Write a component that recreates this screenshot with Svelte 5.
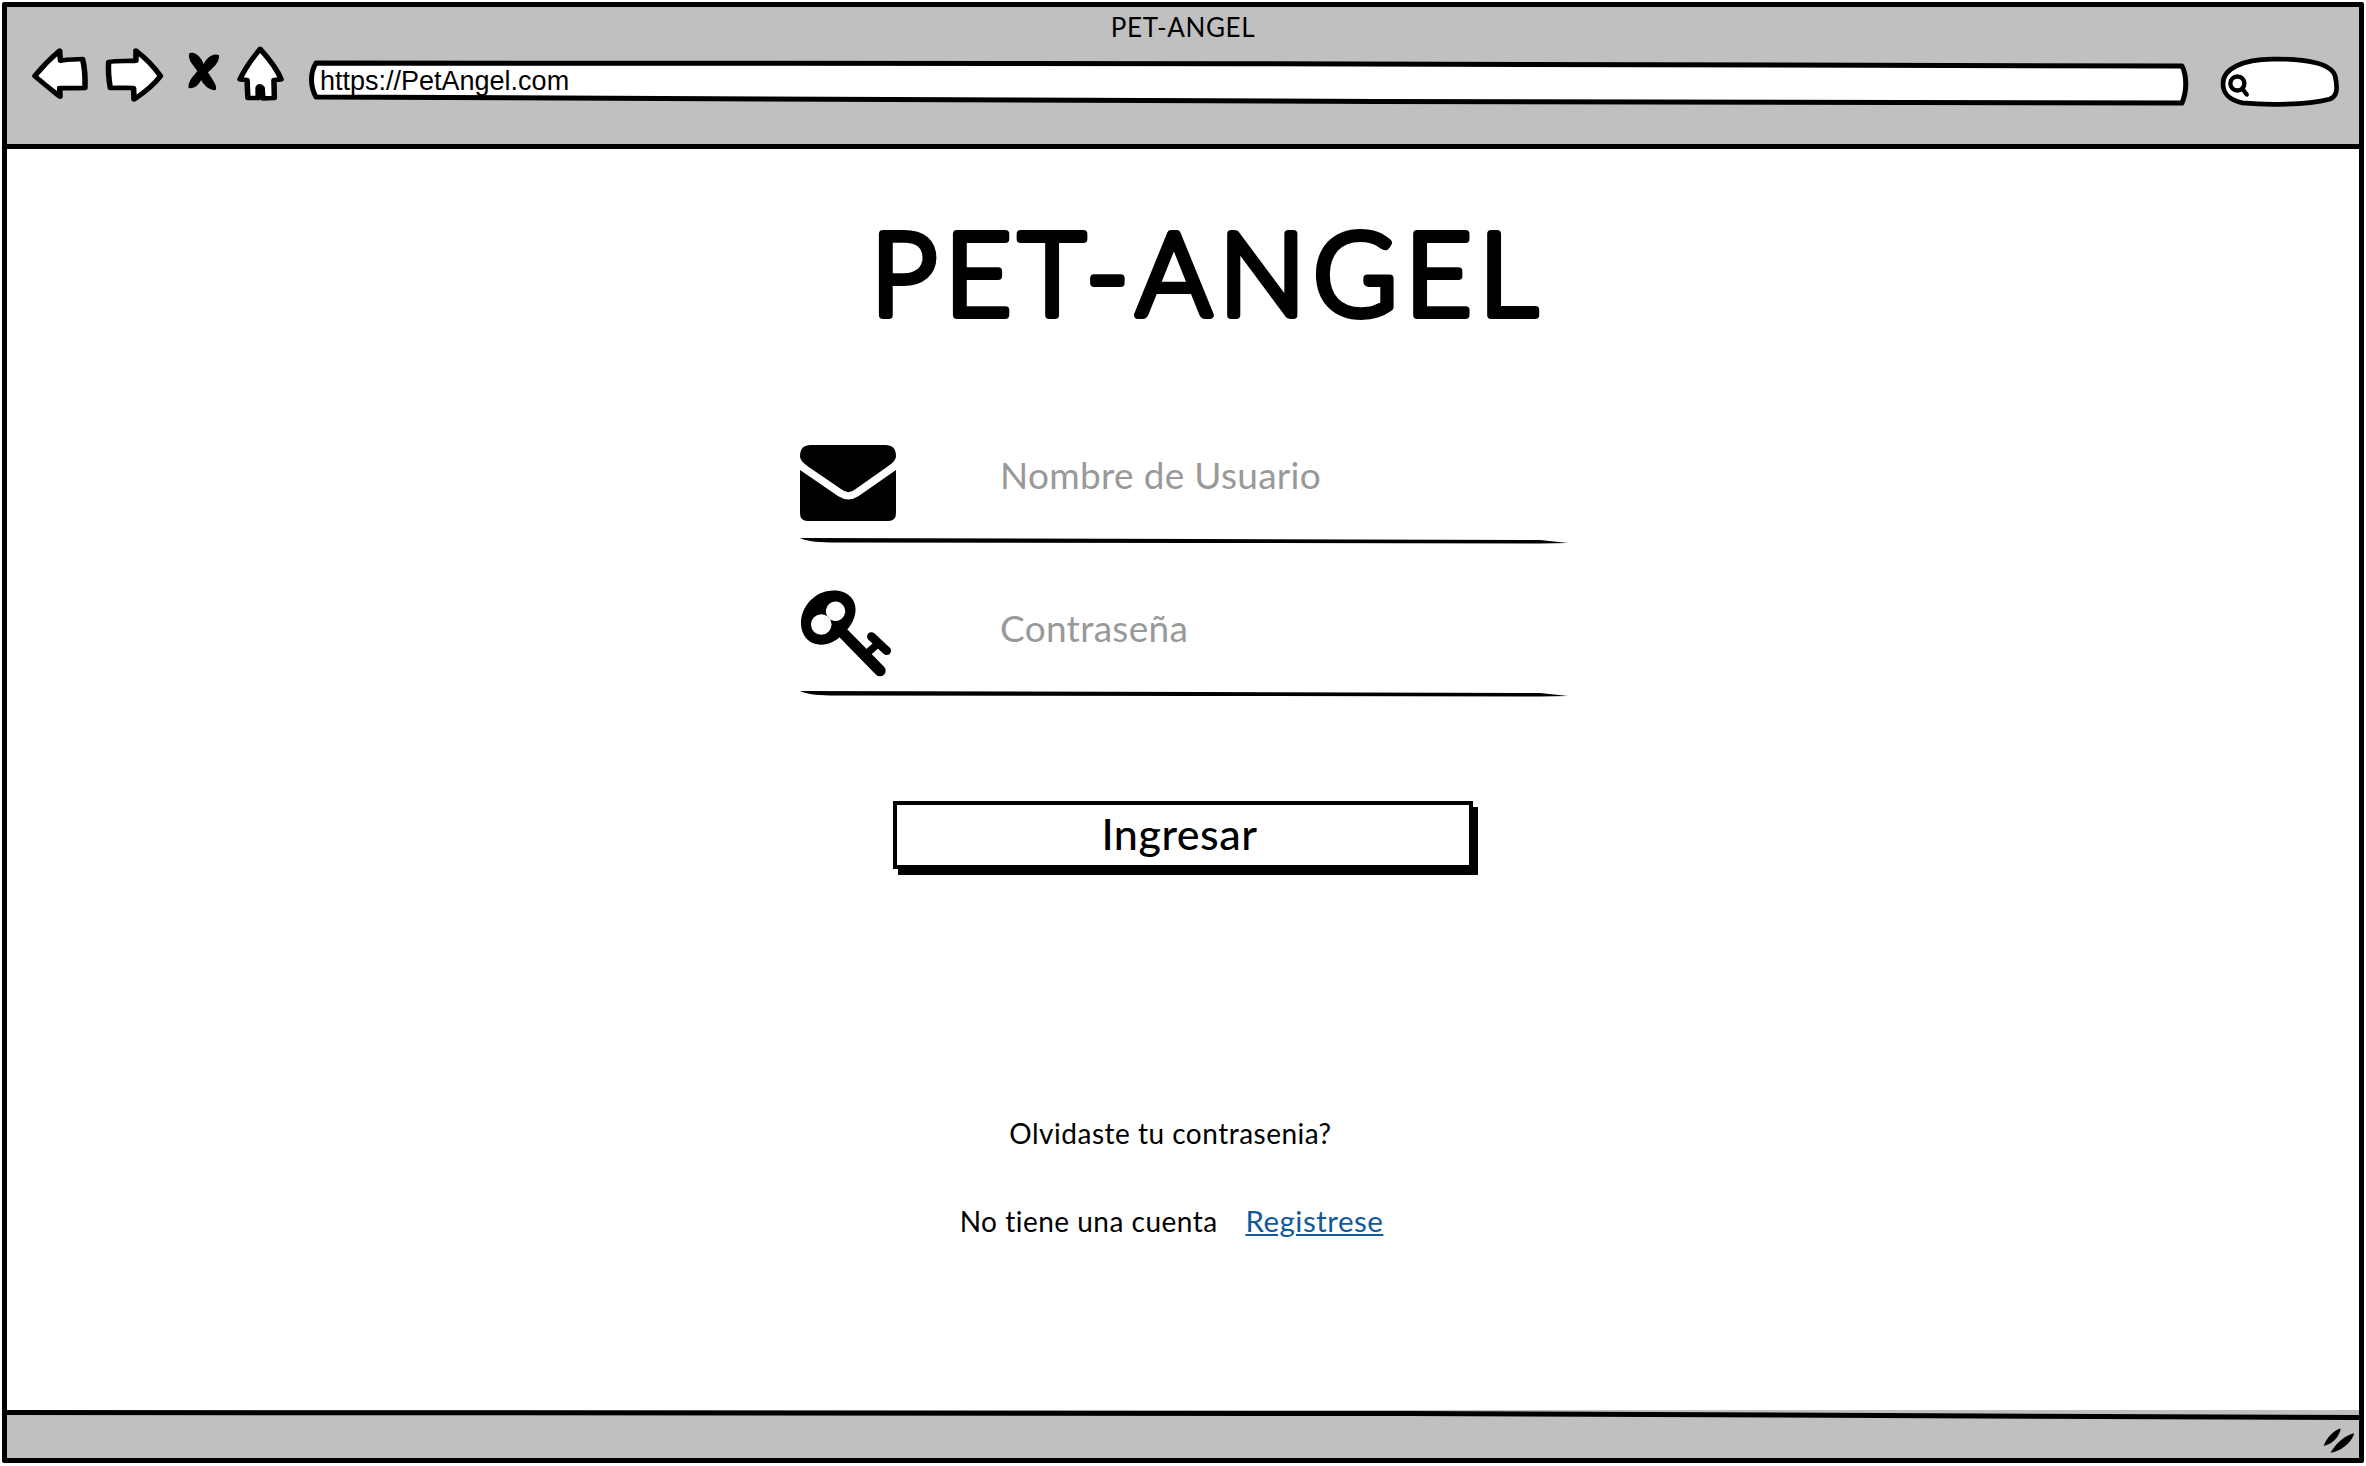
<script>
  const fields = [
    { placeholder: 'Nombre de Usuario', type: 'text', icon: 'mail' },
    { placeholder: 'Contraseña', type: 'password', icon: 'key' }
  ];
</script>

<div class="window">
  <header class="chrome">
    <div class="window-title">PET-ANGEL</div>
    <div class="toolbar">
      <svg class="nav" viewBox="75 130 650 180" preserveAspectRatio="none" aria-hidden="true">
        <g fill="#fff" stroke="#000" stroke-width="14" stroke-linejoin="round">
          <path d="M87 226 C105 200 130 170 150 150 L152 180 C170 176 195 176 208 175 C214 205 215 235 214 262 C195 263 170 262 150 262 L151 288 C130 268 105 245 87 226Z" />
          <path d="M274 184 C295 180 320 182 343 180 L343 150 C365 170 390 200 405 226 C390 250 365 275 338 296 L337 262 C320 261 295 262 278 262 C275 240 272 210 274 184Z" />
          <path d="M657 145 C680 175 700 205 710 236 L692 238 L693 292 L664 293 L662 262 C658 255 654 255 652 262 L652 292 L626 292 L624 238 L606 236 C618 205 638 172 657 145Z" />
        </g>
        <path d="M478 158 C495 150 510 175 514 190 C520 175 535 155 553 163 C556 185 535 205 525 215 C535 235 550 255 545 268 C530 272 512 250 508 238 C500 255 490 265 476 262 C474 240 492 222 498 212 C490 195 472 178 478 158Z" fill="#000" />
      </svg>
      <div class="url">
        <svg class="url-outline" viewBox="0 0 1884 44" preserveAspectRatio="none" aria-hidden="true">
          <path d="M8 2 C500 2 1400 3 1876 5 C1881 15 1881 30 1876 42 C1300 41 500 40 8 36 C2 25 2 12 8 2Z" fill="#fff" stroke="#000" stroke-width="5" stroke-linejoin="round" />
        </svg>
        <span class="url-text">https://PetAngel.com</span>
      </div>
      <svg class="search" viewBox="360 168 365 155" aria-hidden="true">
        <path d="M372 250 C372 205 430 178 520 177 C620 175 700 190 708 230 C716 270 712 290 690 297 C620 315 500 315 430 308 C395 300 372 285 372 250Z" fill="#fff" stroke="#000" stroke-width="14" />
        <circle cx="415" cy="250" r="21" fill="none" stroke="#000" stroke-width="13" />
        <path d="M430 266 L443 283" stroke="#000" stroke-width="13" stroke-linecap="round" />
      </svg>
    </div>
  </header>

  <main class="content">
    <h1 class="brand">
      <svg viewBox="0 0 700 110" aria-label="PET-ANGEL">
        <text x="350" y="96" text-anchor="middle" textLength="666" lengthAdjust="spacing">PET-ANGEL</text>
      </svg>
    </h1>

    <form class="form">
      {#each fields as field}
        <label class="field">
          <span class="field-icon">
            {#if field.icon === 'mail'}
              <svg viewBox="60 72 288 228" class="mail" aria-hidden="true">
                <path d="M60 105 Q60 72 93 72 H315 Q348 72 348 105 C348 118 335 128 325 135 L226 205 Q205 222 184 205 L85 137 C72 128 60 118 60 105Z" />
                <path d="M60 147 L175 226 Q205 245 235 226 L348 147 V277 Q348 300 325 300 H83 Q60 300 60 277Z" />
              </svg>
            {:else}
              <svg viewBox="58 505 275 262" class="key" aria-hidden="true">
                <path fill-rule="evenodd" d="M150 507 C195 503 228 530 224 570 C222 592 210 615 192 632 C160 670 110 682 80 655 C50 625 55 575 85 540 C105 518 128 508 150 507Z M168 540 A26 26 0 1 0 160 598 A26 26 0 1 0 168 540Z M120 578 A26 26 0 1 0 122 640 A26 26 0 1 0 120 578Z" />
                <g fill="none" stroke="#000" stroke-linecap="round">
                  <path d="M190 638 L298 748" stroke-width="34" />
                  <path d="M272 645 L318 688" stroke-width="26" />
                  <path d="M252 702 L292 666" stroke-width="22" stroke-linecap="butt" />
                </g>
              </svg>
            {/if}
          </span>
          <input type="text" placeholder={field.placeholder} />
          <svg class="rule" viewBox="0 0 768 6" preserveAspectRatio="none" aria-hidden="true">
            <path d="M0 0 L400 1 L740 2 L768 5 L740 5.5 L400 5 L30 4.5 Q8 4 0 0Z" />
          </svg>
        </label>
      {/each}

      <button type="button" class="submit">Ingresar</button>
    </form>

    <div class="links">
      <p>Olvidaste tu contrasenia?</p>
      <p class="register">No tiene una cuenta <a href="#registro">Registrese</a></p>
    </div>
  </main>

  <footer class="status">
    <svg class="status-line" viewBox="0 0 2352 10" preserveAspectRatio="none" aria-hidden="true">
      <path d="M0 0 L1400 1 L2352 5 V10 L1400 6 L0 5Z" />
    </svg>
    <svg class="grip" viewBox="470 145 95 75" aria-hidden="true">
      <path d="M472 199 C483 172 505 150 524 146 C522 170 497 196 472 199Z M493 220 C508 192 540 165 566 160 C558 188 525 216 493 220Z" />
    </svg>
  </footer>
</div>

<style>
  :global(body) {
    margin: 0;
    background: #fff;
  }

  .window {
    box-sizing: border-box;
    width: 2362px;
    height: 1461px;
    margin: 2px 2px 3px;
    border: 5px solid #000;
    border-radius: 2px;
    display: flex;
    flex-direction: column;
    font-family: Lato, "Noto Sans", sans-serif;
    color: #000;
    overflow: hidden;
  }

  .chrome {
    box-sizing: border-box;
    height: 142px;
    flex: none;
    background: #c0c0c0;
    border-bottom: 5px solid #000;
  }

  .window-title {
    text-align: center;
    font-size: 26px;
    line-height: 28px;
    padding-top: 6px;
    letter-spacing: 0.6px;
  }

  .toolbar {
    display: flex;
    align-items: flex-start;
    padding: 3px 18px 0 23px;
  }

  .nav {
    width: 257px;
    height: 60px;
    flex: none;
    margin-right: 21px;
  }

  .url {
    position: relative;
    flex: 1;
    height: 44px;
    margin-top: 17px;
    display: flex;
    align-items: center;
    padding-left: 12px;
    box-sizing: border-box;
  }

  .url-outline {
    position: absolute;
    inset: 0;
    width: 100%;
    height: 100%;
    overflow: visible;
  }

  .url-text {
    position: relative;
    font-family: "Liberation Sans", sans-serif;
    font-size: 27px;
    line-height: 36px;
    margin-top: -4px;
  }

  .search {
    width: 122px;
    height: 52px;
    flex: none;
    margin: 12px 0 0 29px;
  }

  .content {
    flex: 1;
    display: flex;
    flex-direction: column;
    align-items: center;
    min-height: 0;
  }

  .brand {
    margin: 70px 0 0;
    width: 700px;
    height: 110px;
    font-weight: 300;
    padding-left: 42px;
    box-sizing: content-box;
  }

  .brand svg {
    display: block;
    width: 100%;
    height: 100%;
    overflow: visible;
  }

  .brand text {
    font-family: Lato, sans-serif;
    font-weight: 300;
    font-size: 114px;
    fill: #000;
    stroke: #000;
    stroke-width: 8px;
    stroke-linejoin: round;
  }

  .form {
    width: 768px;
    margin-top: 105px;
    padding-left: 2px;
    display: flex;
    flex-direction: column;
    align-items: center;
  }

  .field {
    position: relative;
    width: 100%;
    height: 153px;
    display: flex;
    flex-wrap: wrap;
    align-items: flex-start;
  }

  .field-icon {
    width: 96px;
    height: 90px;
    flex: none;
    display: block;
  }

  .mail {
    display: block;
    width: 96px;
    height: 76px;
    margin-top: 11px;
  }

  .key {
    display: block;
    width: 92px;
    height: 87px;
    margin-top: 3px;
  }

  input {
    width: 500px;
    margin-left: 104px;
    margin-top: 19px;
    padding: 0;
    border: 0;
    outline: 0;
    background: none;
    font-family: Lato, sans-serif;
    font-size: 37px;
    line-height: 44px;
    height: 44px;
    letter-spacing: 0.3px;
  }

  input::placeholder {
    color: #999;
    opacity: 1;
  }

  .rule {
    position: absolute;
    left: 0;
    top: 104px;
    width: 768px;
    height: 6px;
  }

  .submit {
    box-sizing: border-box;
    width: 580px;
    height: 68px;
    margin: 61px 0 0 -3px;
    border: 4px solid #000;
    background: #fff;
    box-shadow: 5px 6px 0 #000;
    font-family: Lato, sans-serif;
    font-size: 43px;
    font-weight: 500;
    letter-spacing: 0.5px;
    color: #000;
    padding: 0 6px 4px 0;
  }

  .links {
    margin-top: 247px;
    padding-right: 25px;
    text-align: center;
    font-size: 28px;
    line-height: 34px;
  }

  .links p {
    margin: 0;
    letter-spacing: 0.5px;
  }

  .register {
    padding-top: 54px;
    padding-left: 2px;
  }

  .register a {
    color: #0f5a9e;
    margin-left: 20px;
    font-size: 29.5px;
  }

  .status {
    position: relative;
    flex: none;
    height: 48px;
    background: #c0c0c0;
    display: flex;
    justify-content: flex-end;
    align-items: flex-end;
    padding: 0 5px 5px 0;
    box-sizing: border-box;
  }

  .status-line {
    position: absolute;
    left: 0;
    top: 0;
    width: 100%;
    height: 10px;
  }

  .grip {
    width: 31px;
    height: 25px;
  }
</style>
